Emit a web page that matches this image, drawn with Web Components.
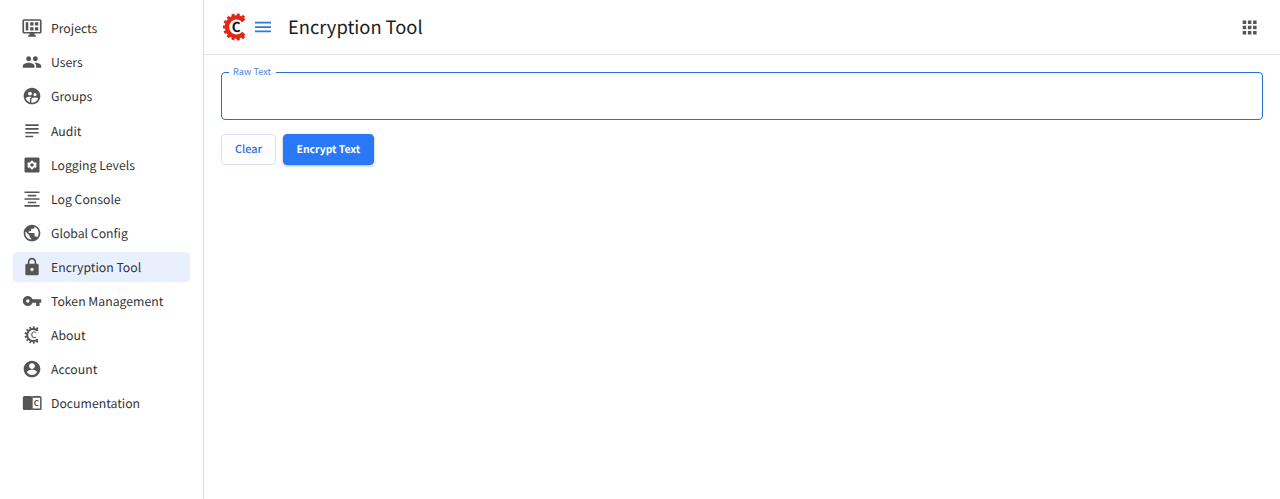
<!DOCTYPE html>
<html lang="en">
<head>
<meta charset="utf-8">
<title>Encryption Tool</title>
<style>
html,body{margin:0;height:100%;background:#fff;overflow:hidden}
body{font-family:"Noto Sans CJK SC","Noto Sans",sans-serif;color:#333;text-rendering:geometricPrecision}
</style>
</head>
<body>
<app-shell>
  <side-nav slot="nav">
    <nav-item icon="projects">Projects</nav-item>
    <nav-item icon="users">Users</nav-item>
    <nav-item icon="groups">Groups</nav-item>
    <nav-item icon="audit">Audit</nav-item>
    <nav-item icon="levels">Logging Levels</nav-item>
    <nav-item icon="console">Log Console</nav-item>
    <nav-item icon="globe">Global Config</nav-item>
    <nav-item icon="lock" selected>Encryption Tool</nav-item>
    <nav-item icon="key">Token Management</nav-item>
    <nav-item icon="gear">About</nav-item>
    <nav-item icon="account">Account</nav-item>
    <nav-item icon="docs">Documentation</nav-item>
  </side-nav>
  <app-header slot="header">Encryption Tool</app-header>
  <text-field label="Raw Text"></text-field>
  <button-row>
    <ui-button>Clear</ui-button>
    <ui-button primary>Encrypt Text</ui-button>
  </button-row>
</app-shell>
<script>
const gear = (cx, cy, inner, outer, tip, gap, n, tooth) => {
  const r = (inner + outer) / 2, a = gap * Math.PI / 180;
  const x = (cx + r * Math.cos(a)).toFixed(2);
  let teeth = '';
  for (let i = 0; i < n; i++) {
    const t = a + 0.3 + (2 * Math.PI - 2 * a - 0.6) * i / (n - 1);
    const c = Math.cos(t), s = Math.sin(t);
    teeth += `M${(cx + r * c).toFixed(2)} ${(cy + r * s).toFixed(2)}L${(cx + tip * c).toFixed(2)} ${(cy + tip * s).toFixed(2)}`;
  }
  return `<path fill="none" stroke="currentColor" stroke-width="${outer - inner}" d="M${x} ${(cy + r * Math.sin(a)).toFixed(2)}A${r} ${r} 0 1 1 ${x} ${(cy - r * Math.sin(a)).toFixed(2)}"/><path fill="none" stroke="currentColor" stroke-width="${tooth}" d="${teeth}"/>`;
};
const ICONS = {
  projects: '<path fill-rule="evenodd" d="M2.500 1.500h19a2 2 0 0 1 2 2v13.200a2 2 0 0 1-2 2H15v1.700h1.500V22.500h-9v-2.100H9v-1.700H2.500a2 2 0 0 1-2-2V3.500a2 2 0 0 1 2-2zm0 1.800v13.600h19V3.300z"/><path d="M4.500 5h3v10h-3zM9.800 5h4v4h-4zm5.700 0h4v4h-4zM9.800 11h4v4h-4zm5.700 0h4v4h-4z"/>',
  users: '<path d="M16 11c1.660 0 2.990-1.340 2.990-3S17.660 5 16 5s-3 1.340-3 3 1.340 3 3 3zm-8 0c1.660 0 2.990-1.340 2.990-3S9.660 5 8 5 5 6.340 5 8s1.340 3 3 3zm0 2c-2.330 0-7 1.170-7 3.500V19h14v-2.500C15 14.170 10.330 13 8 13zm8 0c-.29 0-.62.020-.97.050 1.160.84 1.970 1.970 1.970 3.450V19h6v-2.500c0-2.330-4.670-3.500-7-3.500z"/>',
  groups: '<path d="M12 2C6.480 2 2 6.480 2 12s4.480 10 10 10 10-4.480 10-10S17.520 2 12 2zm3.610 6.340c1.070 0 1.930.86 1.930 1.930s-.86 1.930-1.930 1.930-1.930-.86-1.930-1.930c-.01-1.070.86-1.930 1.930-1.930zm-6-1.580c1.300 0 2.360 1.060 2.360 2.360s-1.060 2.360-2.360 2.360-2.360-1.060-2.360-2.360c0-1.310 1.050-2.360 2.360-2.360zm0 9.130v3.750c-2.400-.75-4.300-2.600-5.140-4.960 1.050-1.120 3.670-1.690 5.140-1.690.53 0 1.200.08 1.900.22-1.640.87-1.900 2.020-1.900 2.680zM12 20c-.27 0-.53-.01-.79-.04v-4.070c0-1.420 2.940-2.130 4.400-2.130 1.070 0 2.920.39 3.840 1.150C18.280 17.880 15.390 20 12 20z"/>',
  audit: '<path d="M4 17.600h9.500v2H4zM4 13.100h16v2H4zM4 8.500h16v2H4zM4 4h16v2H4z"/>',
  levels: '<path fill-rule="evenodd" d="M4.500 3h15A1.500 1.500 0 0 1 21 4.500v15a1.500 1.500 0 0 1-1.500 1.500h-15A1.500 1.500 0 0 1 3 19.500v-15A1.500 1.500 0 0 1 4.500 3zm6.200 3.800-.4 1.700-1.100.6-1.600-.5-1.400 2.300 1.300 1.100-1.300 1.100 1.400 2.300 1.600-.5 1.100.6.400 1.700h2.600l.4-1.700 1.100-.6 1.600.5 1.400-2.300-1.300-1.100 1.300-1.100-1.400-2.300-1.600.5-1.100-.6-.4-1.700zM12 9.900a2.100 2.100 0 1 1 0 4.200 2.100 2.100 0 0 1 0-4.200z"/>',
  console: '<path d="M3 3h18v1.900H3zM7 7h10v1.900H7zM3 11.100h18V13H3zM7 15.200h10v1.900H7zM3 19.300h18v1.900H3z"/>',
  globe: '<path d="M12 2C6.480 2 2 6.480 2 12s4.480 10 10 10 10-4.480 10-10S17.520 2 12 2zm-1 17.930c-3.950-.49-7-3.850-7-7.930 0-.62.080-1.210.21-1.790L9 15v1c0 1.100.9 2 2 2v1.930zm6.900-2.540c-.26-.81-1-1.390-1.900-1.390h-1v-3c0-.55-.45-1-1-1H8v-2h2c.55 0 1-.45 1-1V7h2c1.100 0 2-.9 2-2v-.41c2.930 1.190 5 4.060 5 7.410 0 2.080-.8 3.970-2.100 5.390z"/>',
  lock: '<path d="M18 8h-1V6c0-2.760-2.240-5-5-5S7 3.240 7 6v2H6c-1.100 0-2 .9-2 2v10c0 1.100.9 2 2 2h12c1.100 0 2-.9 2-2V10c0-1.100-.9-2-2-2zm-6 9c-1.100 0-2-.9-2-2s.9-2 2-2 2 .9 2 2-.9 2-2 2zm3.100-9H8.900V6c0-1.710 1.390-3.100 3.100-3.100 1.710 0 3.100 1.390 3.100 3.100v2z"/>',
  key: '<path d="M12.650 10C11.830 7.670 9.610 6 7 6c-3.310 0-6 2.690-6 6s2.690 6 6 6c2.610 0 4.830-1.670 5.650-4H17v4h4v-4h2v-4H12.650zM7 14c-1.100 0-2-.9-2-2s.9-2 2-2 2 .9 2 2-.9 2-2 2z"/>',
  gear: gear(13.5, 12, 6.1, 8.3, 10.4, 42, 10, 2.2) + '<text x="14" y="15.700" text-anchor="middle" font-size="10.500" font-weight="500" letter-spacing="0">C</text>',
  account: '<path d="M12 2C6.480 2 2 6.480 2 12s4.480 10 10 10 10-4.480 10-10S17.520 2 12 2zm0 3c1.930 0 3.500 1.570 3.500 3.500S13.930 12 12 12s-3.500-1.570-3.500-3.500S10.070 5 12 5zm0 14.200c-2.500 0-4.710-1.280-6-3.220.03-1.990 4-3.080 6-3.080 1.990 0 5.970 1.090 6 3.080-1.290 1.940-3.500 3.220-6 3.220z"/>',
  docs: '<path fill-rule="evenodd" d="M3 3.700h8l1 .7 1-.7h8.500a2 2 0 0 1 2 2V19a1.500 1.500 0 0 1-1.500 1.500h-9l-1-.8-1 .8H2.500A1.500 1.500 0 0 1 1 19V5.700a2 2 0 0 1 2-2zM12.800 5.600v13.100h8.900V5.600z"/><text x="17.300" y="15.500" text-anchor="middle" font-size="9.500" font-weight="700" letter-spacing="0">C</text>'
};
const define = (name, html) => customElements.define(name, class extends HTMLElement {
  constructor() {
    super();
    this.attachShadow({ mode: 'open' });
  }
  connectedCallback() {
    this.shadowRoot.innerHTML = typeof html === 'function' ? html(this) : html;
  }
});

define('app-shell', `<style>
:host{display:grid;grid-template-columns:204px 1fr;height:100vh}
aside{border-right:1px solid #dfdfdf;box-sizing:border-box}
.content{padding:17px 17px 0}
</style><aside><slot name="nav"></slot></aside><main><slot name="header"></slot><div class="content"><slot></slot></div></main>`);

define('side-nav', `<style>
:host{display:flex;flex-direction:column;gap:4.100px;padding:13.300px 13px 0}
</style><slot></slot>`);

define('nav-item', el => `<style>
:host{display:flex;align-items:center;height:30px;padding-left:9px;border-radius:4px;font-size:12.250px;line-height:30px;color:#333;white-space:nowrap}
:host([selected]){background:#e8f0fe}
svg{width:20px;height:20px;margin-right:9px;flex:none;fill:#555;color:#555;overflow:visible}
</style><svg viewBox="0 0 24 24">${ICONS[el.getAttribute('icon')]}</svg><slot></slot>`);

define('app-header', `<style>
:host{display:flex;align-items:center;height:54px;border-bottom:1px solid #e5e5e5;padding:0 23px 0 18px;color:#1c1c1c;font-size:18.300px;line-height:54px}
.logo{width:26px;height:30px;color:#e42618}
.logo text{fill:#111}
.menu{width:16px;height:12px;margin-left:7px;fill:#2f75e0}
.title{margin-left:17px;flex:1}
.apps{width:15px;height:15px;fill:#555}
</style>
<svg class="logo" viewBox="0 0 26 30">${gear(14.5, 15, 7.4, 11.7, 13.5, 40, 11, 3)}<text x="14.200" y="20" text-anchor="middle" font-size="13.500" font-weight="700">C</text></svg>
<svg class="menu" viewBox="0 0 16 12"><path d="M0 .8h16v1.700H0zM0 5.200h16v1.700H0zM0 9.600h16v1.700H0z"/></svg>
<span class="title"><slot></slot></span>
<svg class="apps" viewBox="0 0 15 15"><path d="M.7.500h3.500V4H.7zM5.900.500h3.500V4H5.900zM11.100.500h3.500V4h-3.500zM.7 5.700h3.500v3.500H.7zM5.900 5.700h3.500v3.500H5.900zM11.100 5.700h3.500v3.500h-3.500zM.7 10.900h3.500v3.500H.7zM5.900 10.900h3.500v3.500H5.900zM11.100 10.900h3.500v3.500h-3.500z"/></svg>`);

define('text-field', el => `<style>
:host{display:flow-root;height:48px}
fieldset{box-sizing:border-box;height:54px;margin:-6px 0 0;border:1px solid #2470d8;border-radius:4px;padding:0 7px;min-width:0}
legend{padding:0 4.500px 0 4px;height:12px;line-height:11px;font-size:9.200px;color:#4f80e0}
</style><fieldset><legend>${el.getAttribute('label')}</legend></fieldset>`);

define('button-row', `<style>:host{display:flex;gap:7px;margin-top:14px}</style><slot></slot>`);

define('ui-button', `<style>
:host{display:flex;box-sizing:border-box;height:31px;padding:0 13px;align-items:center;border:1px solid #dcdffa;border-radius:4px;color:#2b6fdc;font-size:10.900px;font-weight:500;line-height:29px;white-space:nowrap}
:host([primary]){padding:0 12.500px;font-size:10.400px;line-height:28px;padding-bottom:1px;font-weight:700;background:#2979f6;border-color:#2979f6;color:#fff;box-shadow:0 1px 3px rgba(0,0,0,.3)}
</style><slot></slot>`);
</script>
</body>
</html>
